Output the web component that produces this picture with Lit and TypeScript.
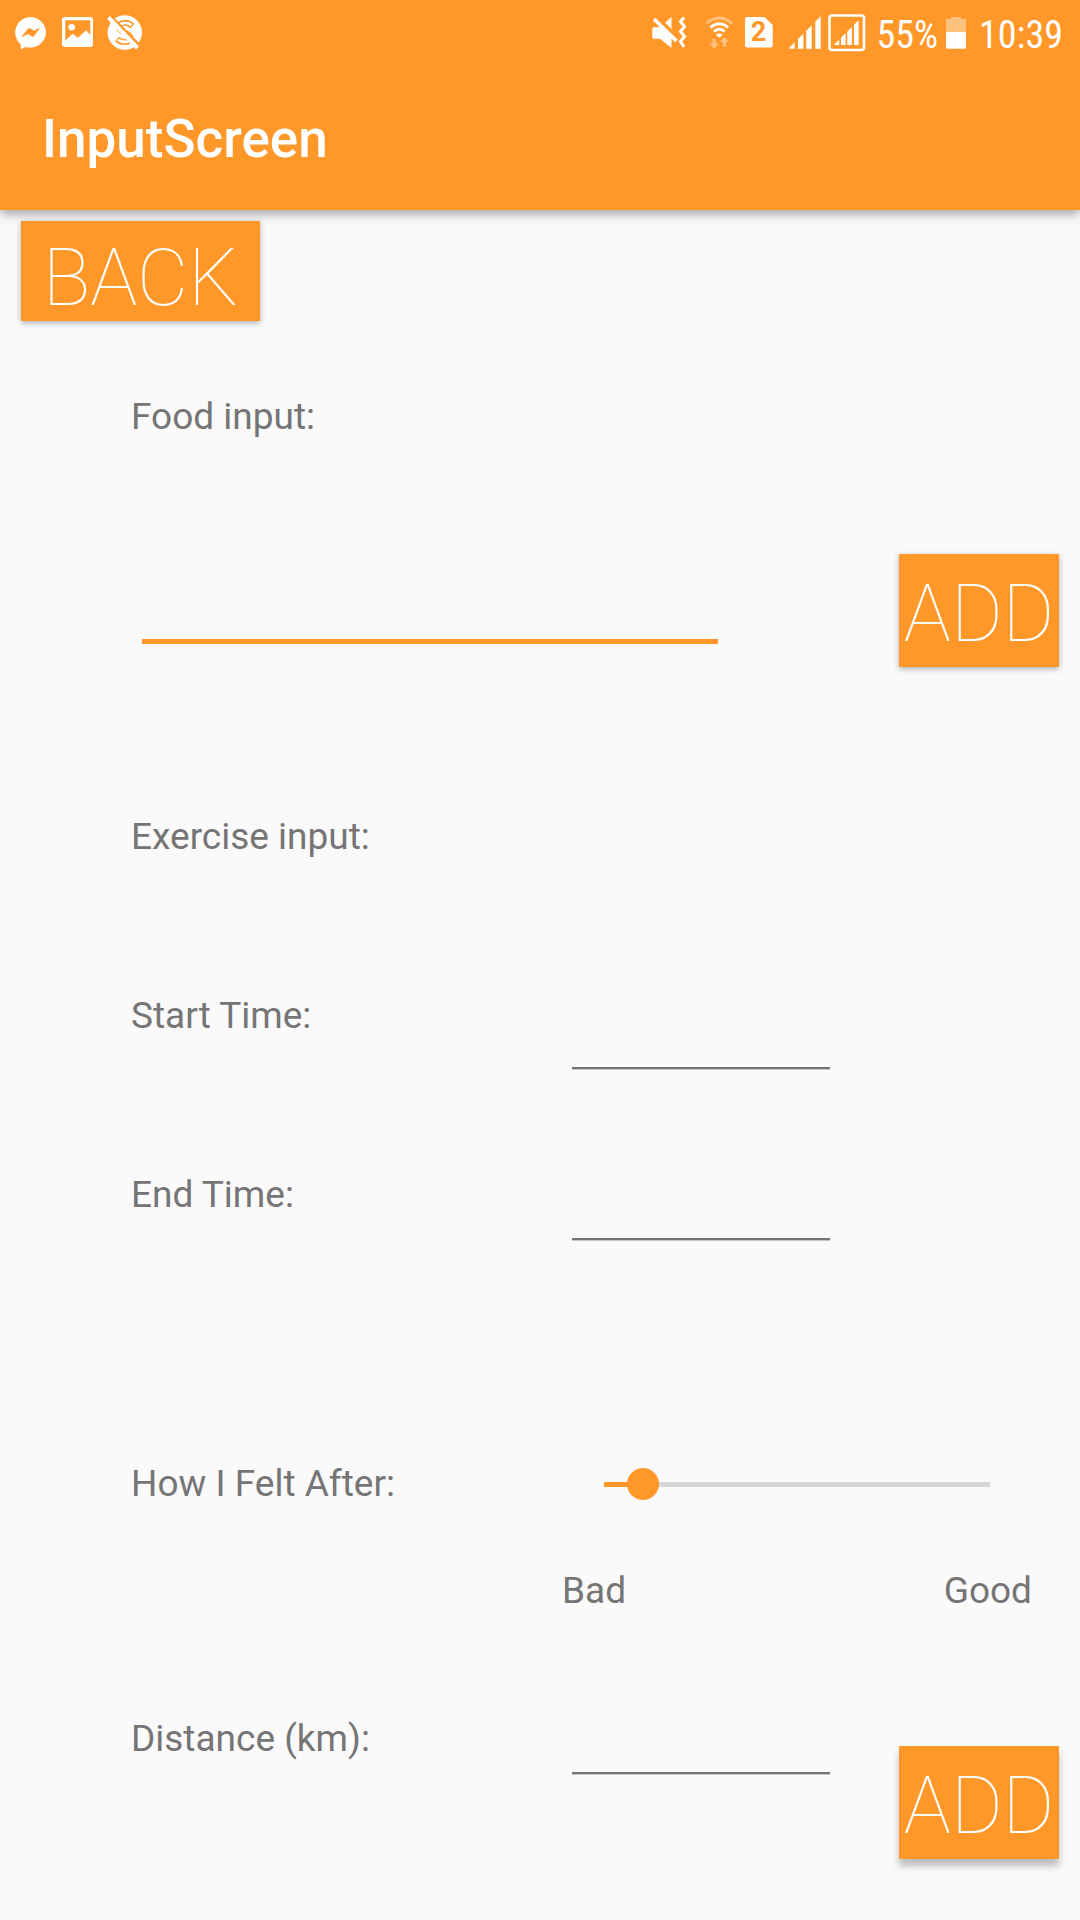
import { LitElement, html, css, svg } from "lit";
import { customElement, state } from "lit/decorators.js";

@customElement("status-bar")
export class StatusBar extends LitElement {
  static styles = css`
    :host {
      display: flex;
      justify-content: space-between;
      height: 63px;
      padding: 0 17px 0 14px;
      background: #ff9829;
      color: #fff;
      font-family: "Roboto Condensed", "Liberation Sans Narrow", Roboto, sans-serif;
      font-size: 38px;
      line-height: 70px;
    }
    .group {
      display: flex;
    }
    .left {
      gap: 14px;
    }
    svg {
      display: block;
      height: 63px;
      flex: none;
    }
    .soft {
      opacity: 0.4;
    }
    .sim {
      font: 700 27px Roboto, sans-serif;
    }
    .percent {
      margin: 0 8px 0 10px;
    }
    .clock {
      margin-left: 13px;
    }
  `;

  private bars(x: number[], width: number, left: number, bottom: number) {
    return x.map((start) => {
      const end = start + width;
      const a = bottom - (start - left);
      const b = bottom - (end - left);
      return svg`<path d="M${start} ${bottom}V${a}L${end} ${b}V${bottom}Z" fill="#fff" />`;
    });
  }

  render() {
    return html`
      <div class="group left">
        <svg width="34" viewBox="14 0 34 63" aria-hidden="true">
          <path d="M30.5 17a15.7 15.3 0 1 1-5 29.900L21 49.200l-.5-5A15.500 15.500 0 0 1 30.500 17z" fill="#fff" />
          <path d="M21 37.200l6.700-8.200q1.500-1.500 3.300-.2l3 2 6.200-3.300-5.800 8.200q-1.500 1.700-3.300.4l-3-2.200z" fill="#ff9829" />
        </svg>
        <svg width="31" viewBox="62 0 31 63" aria-hidden="true">
          <rect x="62" y="17" width="31" height="30" rx="3" fill="#fff" />
          <path d="M65.300 20.300h25v14.500l-4.300-4.500-8 7.500-5.300-4-7.400 6.700z" fill="#ff9829" />
          <circle cx="71.700" cy="27.200" r="3.300" fill="#fff" />
        </svg>
        <svg width="36" viewBox="107 0 36 63" aria-hidden="true">
          <circle cx="124.800" cy="32.500" r="17.200" fill="#fff" />
          <g fill="none">
            <path d="M132.500 26C127 21 119 22 119 27.500c0 5.500 11.500 4.500 11.500 10.500 0 5-8.500 5.500-13.500 1" stroke="#ff9829" stroke-width="5.800" />
            <path d="M131.500 25.200C127 21.500 119 22.500 119 27.500c0 5.500 11.500 4.500 11.500 10.500 0 5-8 5-12.500 1.700" stroke="#fff" stroke-width="2.800" />
          </g>
          <path d="M110.500 16l29.500 30" stroke="#ff9829" stroke-width="3" />
          <path d="M108.500 17.500l29 30.500" stroke="#fff" stroke-width="4" />
        </svg>
      </div>
      <div class="group">
        <svg width="39" viewBox="650 0 39 63" aria-hidden="true">
          <path d="M652.300 29q0-1.700 1.700-1.700h6L671.500 17v31L660 38.700h-6q-1.700 0-1.700-1.700z" fill="#fff" />
          <path d="M655 15.500l22 22" stroke="#ff9829" stroke-width="4" />
          <path d="M654 19l22.500 22" stroke="#fff" stroke-width="3.600" />
          <path d="M684 17.500l-3.500 4 4 5-4 5 4 5-4 5 3.500 5.500" fill="none" stroke="#fff" stroke-width="3" />
        </svg>
        <svg width="44" viewBox="689 0 44 63" aria-hidden="true">
          <g fill="none" stroke="#fff" stroke-width="2.800">
            <path class="soft" d="M706.500 23.500q12.800-11 25.600 0" />
            <path d="M710.500 27.500q8.800-7.500 17.700 0" />
            <path d="M714 31.500q5.300-4.500 10.700 0" />
            <path d="M715.800 34.800q3.500-2.500 7 0l-3.500 3z" fill="#fff" stroke="none" />
            <path class="soft" d="M712.500 39h3.300v4.500h3.200l-4.800 5.500-4.900-5.500h3.200zM722.800 46.500h3.300V42h3.200l-4.800-5.500-4.900 5.500h3.200z" fill="#fff" stroke="none" />
          </g>
        </svg>
        <svg width="40" viewBox="733 0 40 63" aria-hidden="true">
          <path d="M747 17h17.500l8.200 8v20.500q0 2-2 2H747q-2 0-2-2V19q0-2 2-2z" fill="#fff" />
          <text class="sim" x="758.500" y="41" text-anchor="middle" fill="#ff9829">2</text>
        </svg>
        <svg width="94" viewBox="773 0 94 63" aria-hidden="true">
          ${this.bars([789.3, 798, 806.3, 815.3], 5.4, 788.3, 48.7)}
          ${this.bars([834.5, 841, 847.3, 854], 4.6, 833.8, 45)}
          <rect x="829.500" y="15.500" width="34.500" height="34.500" rx="2.500" fill="none" stroke="#fff" stroke-width="2.600" />
        </svg>
        <span class="percent">55%</span>
        <svg width="20" viewBox="946 0 20 63" aria-hidden="true">
          <path class="soft" d="M946 19h5v-2h10v2h5v13h-20z" fill="#fff" />
          <path d="M946 32h20v16.700h-20z" fill="#fff" />
        </svg>
        <span class="clock">10:39</span>
      </div>
    `;
  }
}

@customElement("app-root")
export class AppRoot extends LitElement {
  @state() private feeling = 10;

  static styles = css`
    :host {
      display: block;
      min-height: 100vh;
      background: #fafafa;
      color: #757575;
      font-family: Roboto, sans-serif;
      font-size: 37px;
      line-height: 52px;
    }
    * {
      box-sizing: border-box;
    }
    .header {
      background: #ff9829;
      box-shadow: 0 4px 10px rgba(0, 0, 0, 0.35);
    }
    .title {
      margin: 0;
      padding: 5px 42px 0;
      color: #fff;
      font-size: 53px;
      font-weight: 500;
      line-height: 142px;
    }
    .content {
      padding: 11px 21px 61px;
    }
    .form {
      display: flex;
      flex-direction: column;
      padding: 70px 0 0 110px;
    }
    .button {
      display: block;
      width: 160px;
      height: 113px;
      margin: 0;
      padding: 7px 0 0;
      border: 0;
      background: #ff9829;
      box-shadow: 0 2px 6px rgba(0, 0, 0, 0.3);
      color: #fff;
      font-family: Roboto, sans-serif;
      font-size: 79px;
      font-weight: 100;
      line-height: 79px;
      white-space: nowrap;
    }
    .back {
      width: 239px;
      height: 100px;
      padding-top: 14px;
    }
    .raised {
      box-shadow: 0 7px 7px rgba(0, 0, 0, 0.25);
    }
    .text {
      display: block;
      width: 100%;
      margin: 0;
      padding: 0 0 4px;
      border: 0;
      border-bottom: 2px solid #757575;
      border-radius: 0;
      outline: 0;
      background: transparent;
      box-shadow: 0 1px 0 #c6c6c6;
      color: #212121;
      font: inherit;
    }
    .focus {
      flex: 1;
      min-width: 0;
      height: 90px;
      border-bottom: 5px solid #ff9829;
      box-shadow: none;
    }
    .food {
      display: flex;
      align-items: flex-start;
      gap: 181px;
      margin: 111px 0 144px 11px;
    }
    .row {
      display: grid;
      grid-template-columns: 441fr 258fr 229fr;
      align-items: start;
    }
    .start {
      margin-top: 127px;
    }
    .start .text {
      height: 79px;
    }
    .end {
      margin-top: 100px;
    }
    .end .text {
      height: 71px;
    }
    .felt {
      display: grid;
      grid-template-columns: 457fr 418fr 53fr;
      align-items: center;
      margin-top: 218px;
    }
    .slider {
      appearance: none;
      width: 100%;
      height: 50px;
      margin: 0;
      outline: 0;
      background: transparent;
    }
    .slider::-webkit-slider-runnable-track {
      height: 5px;
      background: linear-gradient(
        to right,
        transparent 16px,
        #ff9829 16px,
        #ff9829 var(--fill),
        #d6d6d6 var(--fill),
        #d6d6d6 calc(100% - 16px),
        transparent calc(100% - 16px)
      );
    }
    .slider::-webkit-slider-thumb {
      appearance: none;
      width: 32px;
      height: 32px;
      margin-top: -14px;
      border: 0;
      border-radius: 50%;
      background: #ff9829;
    }
    .scale {
      display: grid;
      grid-template-columns: 431fr 470fr 27fr;
      margin-top: 55px;
    }
    .ends {
      display: flex;
      grid-column: 2;
      justify-content: space-between;
    }
    .distance {
      margin-top: 96px;
    }
    .distance .text {
      height: 61px;
    }
    .distance .button {
      justify-self: end;
      margin-top: 33px;
    }
  `;

  private onFeeling(event: Event) {
    this.feeling = Number((event.target as HTMLInputElement).value);
  }

  render() {
    const fill = `calc(16px + (100% - 32px) * ${this.feeling / 100})`;
    return html`
      <header class="header">
        <status-bar></status-bar>
        <h1 class="title">InputScreen</h1>
      </header>
      <main class="content">
        <button class="button back" type="button">BACK</button>
        <div class="form">
          <label for="food">Food input:</label>
          <div class="food">
            <input class="text focus" id="food" type="text" />
            <button class="button" type="button">ADD</button>
          </div>
          <div>Exercise input:</div>
          <div class="row start">
            <label for="start">Start Time:</label>
            <input class="text" id="start" type="text" />
          </div>
          <div class="row end">
            <label for="end">End Time:</label>
            <input class="text" id="end" type="text" />
          </div>
          <div class="felt">
            <label for="felt">How I Felt After:</label>
            <input
              class="slider"
              id="felt"
              type="range"
              min="0"
              max="100"
              .value=${String(this.feeling)}
              style="--fill: ${fill}"
              @input=${this.onFeeling}
            />
          </div>
          <div class="scale">
            <div class="ends"><span>Bad</span><span>Good</span></div>
          </div>
          <div class="row distance">
            <label for="distance">Distance (km):</label>
            <input class="text" id="distance" type="text" />
            <button class="button raised" type="button">ADD</button>
          </div>
        </div>
      </main>
    `;
  }
}
